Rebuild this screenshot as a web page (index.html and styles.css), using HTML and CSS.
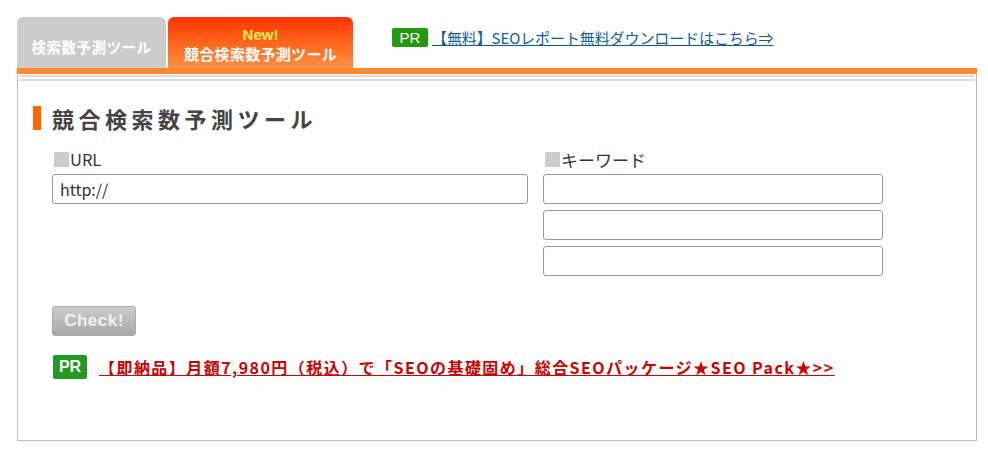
FILE: index.html
```html
<!DOCTYPE html>
<html lang="ja">
<head>
<meta charset="utf-8">
<link rel="stylesheet" href="styles.css">
</head>
<body>
<div class="wrap">
  <div class="top">
    <div class="tab tab-off"><span>検索数予測ツール</span></div>
    <div class="tab tab-on"><span class="new">New!</span><span class="tab-name">競合検索数予測ツール</span></div>
    <div class="ad-top"><span class="pr">PR</span><a href="#" class="ad-link">【無料】SEOレポート無料ダウンロードはこちら⇒</a></div>
  </div>
  <div class="bar"></div>
  <div class="box">
    <div class="rule"></div>
    <h1 class="title">競合検索数予測ツール</h1>
    <div class="form">
      <div class="col col-url">
        <div class="label"><span class="sq"></span>URL</div>
        <input class="field" type="text" value="http://">
      </div>
      <div class="col col-kw">
        <div class="label"><span class="sq"></span>キーワード</div>
        <input class="field" type="text">
        <input class="field" type="text">
        <input class="field" type="text">
      </div>
    </div>
    <button class="check">Check!</button>
    <div class="ad-bottom"><span class="pr2">PR</span><a href="#" class="ad-red">【即納品】月額7,980円（税込）で「SEOの基礎固め」総合SEOパッケージ★SEO Pack★&gt;&gt;</a></div>
  </div>
</div>
</body>
</html>
```
FILE: styles.css
```css
* { box-sizing: border-box; }
body {
  margin: 0;
  padding: 17px 0 0 17px;
  background: #fff;
  font-family: "Noto Sans CJK JP", "Noto Sans", sans-serif;
  color: #333;
}
.wrap { width: 960px; }
.top { display: flex; align-items: flex-start; height: 51px; }
.tab {
  height: 51px;
  border-radius: 6px 6px 0 0;
  display: flex;
  flex-direction: column;
  align-items: center;
  justify-content: center;
  color: #fff;
  font-weight: bold;
}
.tab-off {
  width: 149px;
  margin-right: 2px;
  background: #cccccc;
  font-size: 14.5px;
  padding-top: 8px;
  letter-spacing: 0.5px;
}
.tab-on {
  width: 185px;
  background: linear-gradient(#ff3300, #ff6a1e 55%, #ff9044);
  line-height: 19px;
  padding-top: 2px;
}
.new { color: #ffee55; font-size: 15px; font-family: "Liberation Sans", sans-serif; font-weight: bold; }
.tab-on .tab-name { font-size: 15px; letter-spacing: 0.3px; }
.ad-top { display: flex; align-items: center; margin-left: 39px; margin-top: 10px; }
.pr {
  display: inline-block;
  background: #229911;
  color: #fff;
  width: 36px;
  height: 19px;
  line-height: 19px;
  text-align: center;
  border-radius: 2px;
  font-family: "Liberation Sans", sans-serif;
  font-size: 15px;
  margin-right: 4px;
}
.ad-link { color: #0f5a9e; font-size: 15px; text-decoration: underline; letter-spacing: -0.1px; }
.bar { height: 6px; background: #ff8833; }
.box {
  height: 367px;
  border: 1px solid #bbbbbb;
  border-top: none;
  padding: 1px 1px 0 1px;
}
.rule {
  height: 6px;
  border-top: 2px solid #dddddd;
  border-bottom: 2px solid #dddddd;
  border-left: 1px solid #e8e8e8;
  border-right: 1px solid #e8e8e8;
}
.title {
  margin: 25px 0 0 14px;
  height: 24px;
  border-left: 8px solid #ff6600;
  padding-left: 11px;
  font-size: 22px;
  line-height: 24px;
  font-weight: bold;
  color: #444;
  letter-spacing: 4.5px;
}
.form {
  display: grid;
  grid-template-columns: 476px 340px;
  column-gap: 15px;
  margin: 19px 0 0 33px;
  align-items: start;
}
.col { display: flex; flex-direction: column; gap: 6px; }
.label {
  display: flex;
  align-items: center;
  height: 20px;
  font-size: 16.5px;
  color: #333;
  padding-left: 2px;
}
.col-kw .label { font-size: 17px; }
.sq { width: 15px; height: 15px; background: #cccccc; margin-right: 1px; }
.field {
  width: 100%;
  height: 30px;
  border: 1px solid #999;
  border-radius: 3px;
  padding: 0 7px;
  font-size: 16px;
  font-family: "Noto Sans CJK JP", "Noto Sans", sans-serif;
  color: #333;
  background: #fff;
  margin: 0;
}
.col .label + .field { margin-top: -1px; }
.check {
  display: block;
  margin: 30px 0 0 33px;
  width: 84px;
  height: 30px;
  border: 1px solid #aaa;
  border-radius: 3px;
  background: linear-gradient(#cccccc, #a8a8a8);
  color: #f2f2f2;
  font-family: "Liberation Sans", sans-serif;
  font-weight: bold;
  font-size: 17px;
  letter-spacing: 0.5px;
  padding: 0;
}
.ad-bottom { display: flex; align-items: center; margin: 19px 0 0 34px; }
.pr2 {
  display: inline-block;
  width: 34px;
  height: 24px;
  line-height: 24px;
  background: #229922;
  color: #fff;
  border-radius: 2px;
  text-align: center;
  font-family: "Liberation Sans", sans-serif;
  font-weight: bold;
  font-size: 16px;
  margin-right: 12px;
}
.ad-red { color: #cc0000; font-weight: bold; font-size: 16px; text-decoration: underline; letter-spacing: 1.45px; }
```
